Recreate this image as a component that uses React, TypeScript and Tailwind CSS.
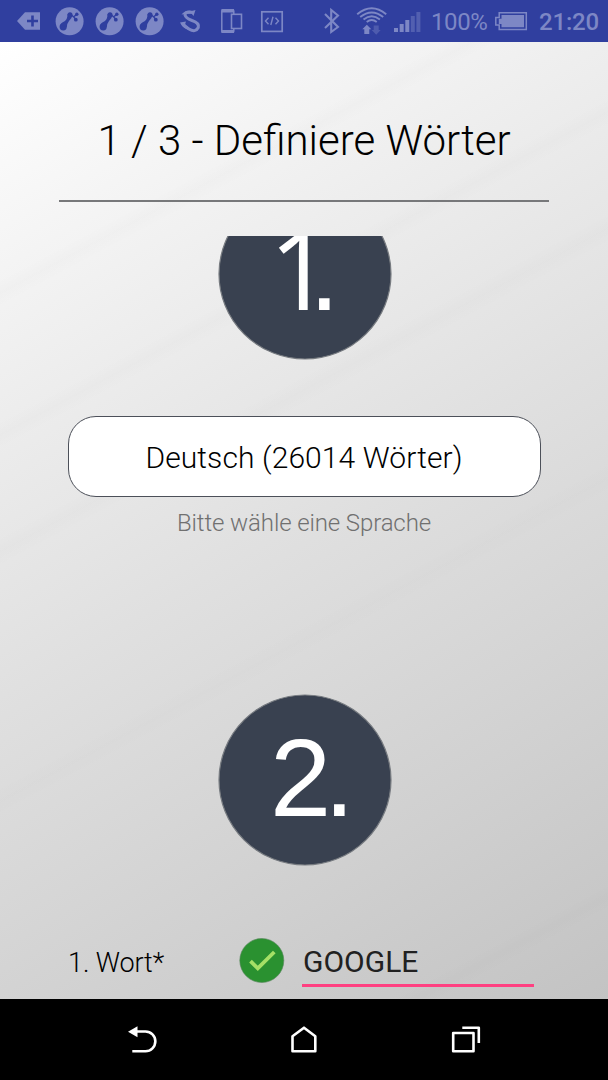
import type { ReactNode } from "react";

function TrayIcon({ children }: { children: ReactNode }) {
  return (
    <svg viewBox="0 0 40 42" className="h-[42px] w-10 shrink-0" fill="none">
      {children}
    </svg>
  );
}

function BrushIcon() {
  return (
    <TrayIcon>
      <circle cx="19.6" cy="21.3" r="14" fill="currentColor" />
      <g fill="#303f9f">
        <circle cx="13.2" cy="26.8" r="3.6" />
        <path d="M10.2 24.6 Q12 22.3 15 21 Q17.5 19 17.6 14 L22.4 15 Q22 18.5 19 21 Q17 23.5 16.8 27 Z" />
        <circle cx="20" cy="14.7" r="2.5" />
        <circle cx="26.8" cy="14.2" r="1.7" />
        <circle cx="25.8" cy="19.7" r="1.9" />
      </g>
      <path d="M20.5 14.3 L24 17.2 L25.8 19.7 M23.5 17 L26.8 14.2" stroke="#303f9f" strokeWidth="1.3" />
    </TrayIcon>
  );
}

function StatusBar() {
  return (
    <div className="flex h-[42px] items-center bg-[#303f9f] text-[#7d87c5]">
      <svg viewBox="0 0 50 42" className="h-[42px] w-[50px] shrink-0">
        <path d="M17 21 L25 12.3 H40 V29.8 H25 Z" fill="currentColor" />
        <path d="M32.5 15.5 V26.5 M27 21 H38" stroke="#303f9f" strokeWidth="2.6" />
      </svg>
      <BrushIcon />
      <BrushIcon />
      <BrushIcon />
      <TrayIcon>
        <path
          d="M23.5 12.5 Q15.5 10.5 15 15 Q15.5 18 22 20.5 Q29.5 23 28.3 27.5 Q25.5 33 19 29 Q15 26.5 12.5 23.5"
          stroke="currentColor"
          strokeWidth="3"
        />
        <path d="M11.5 14.5 Q15 9.5 22 11 L25.5 10 L23.5 16 L21.5 13.5 Z M10 22.5 L16 21.5 L15 24.5 L23 31 Q13 30 10 22.5 Z" fill="currentColor" />
      </TrayIcon>
      <TrayIcon>
        <rect x="11.8" y="10" width="12" height="22.3" rx="1" stroke="currentColor" strokeWidth="1.5" />
        <path d="M11.5 9 H24 V12.5 H11.5 Z M11.5 30 H24 V33 H11.5 Z" fill="currentColor" />
        <rect x="21.5" y="14.3" width="10" height="14.2" fill="#303f9f" stroke="currentColor" strokeWidth="1.6" />
      </TrayIcon>
      <TrayIcon>
        <rect x="11.8" y="11.8" width="20.4" height="19.6" stroke="currentColor" strokeWidth="1.7" />
        <path
          d="M18.5 17.8 L15.5 21 L18.5 24.2 M25.5 17.8 L28.5 21 L25.5 24.2 M23 16.8 L20.8 25"
          stroke="currentColor"
          strokeWidth="1.4"
        />
      </TrayIcon>

      <svg viewBox="0 0 40 42" className="ml-5 h-[42px] w-10 shrink-0" fill="none">
        <path d="M15 14 L28 27 L21.2 32 V10 L28 15.5 L15 28" stroke="currentColor" strokeWidth="2.1" />
      </svg>
      <TrayIcon>
        <path
          d="M7.5 14 Q22 2 36.5 14 M10.5 16.8 Q22 7.5 33.5 16.8 M13.8 19.3 Q22 12.7 30.2 19.3 M17 21.8 Q22 17.8 27 21.8"
          transform="translate(-.3 .3)"
          stroke="currentColor"
          strokeWidth="1.9"
        />
        <path d="M16.8 24.8 L21.3 29.3 H19.3 V34 H14.3 V29.3 H12.3 Z" fill="currentColor" />
        <path d="M23.7 25.5 H28.7 V30 H30.7 L26.2 34.8 L21.7 30 H23.7 Z" fill="currentColor" opacity=".4" />
      </TrayIcon>
      <svg viewBox="0 0 41 42" className="h-[42px] w-[41px] shrink-0" fill="currentColor">
        <path d="M4 28 H8 V32 H4 Z M9.7 24 H13.7 V32 H9.7 Z M15.3 20 H19.3 V32 H15.3 Z" />
        <path d="M20.8 16 H24.8 V32 H20.8 Z M26.4 12 H30.4 V32 H26.4 Z" opacity=".45" />
      </svg>
      <span className="w-[61px] pt-[2px] text-[24px] leading-[40px] tracking-[-0.4px]">100%</span>
      <svg viewBox="0 0 46 42" className="h-[42px] w-[46px] shrink-0" fill="none">
        <path d="M7.2 12.8 H34.3 V29.5 H7.2 V25 H3.8 V17.5 H7.2 Z" stroke="currentColor" strokeWidth="1.5" />
        <path d="M9.5 15 H32 V27.3 H9.5 V24 H6.8 V18.8 H9.5 Z" fill="currentColor" />
      </svg>
      <span className="ml-px pt-[2px] text-[24px] font-medium leading-[40px] tracking-[-0.2px]">21:20</span>
    </div>
  );
}

function Step({ children }: { children: ReactNode }) {
  return (
    <svg viewBox="0 0 174 172" className="h-[172px] w-[174px] shrink-0" fill="#fff">
      <ellipse cx="87" cy="86" rx="86" ry="85" fill="#394150" stroke="#777b80" strokeWidth="1.2" />
      {children}
    </svg>
  );
}

function NavBar() {
  return (
    <nav className="flex h-[81px] items-center justify-center gap-[120px] bg-black text-white">
      <svg viewBox="0 0 42 42" className="size-[42px]" fill="none">
        <path d="M12 12.5 H24.5 A9.7 9.7 0 0 1 24.5 32.2 H11.3" stroke="currentColor" strokeWidth="2.6" />
        <path d="M7 12.7 L16.5 7.2 V18.2 Z" fill="currentColor" />
      </svg>
      <svg viewBox="0 0 42 42" className="size-[42px]" fill="none">
        <path
          d="M9.5 32.2 V17.2 L21 8.7 L32.3 17.2 V32.2 Z"
          stroke="currentColor"
          strokeWidth="2.6"
          strokeLinejoin="round"
        />
      </svg>
      <svg viewBox="0 0 42 42" className="size-[42px]" fill="none">
        <path
          d="M8.2 14 H28.5 V32.2 H8.2 Z M17.3 8.7 H33.8 V24"
          stroke="currentColor"
          strokeWidth="2.6"
          strokeLinejoin="round"
        />
      </svg>
    </nav>
  );
}

export default function App() {
  return (
    <div className="flex h-[1080px] w-[608px] flex-col overflow-hidden font-['Roboto',sans-serif]">
      <StatusBar />
      <main className="flex h-[957px] flex-col bg-[linear-gradient(152deg,transparent_18.5%,#00000003_19.6%,transparent_20.7%,transparent_29.6%,#00000003_30.7%,transparent_31.8%,transparent_38.6%,#00000003_39.8%,transparent_41%,transparent_58%,#00000002_59.3%,transparent_60.5%,transparent_91%,#00000003_92%,transparent_93%),linear-gradient(150deg,#ffffff_0%,#f1f1f1_22%,#e0e0e0_50%,#d0d0d0_78%,#c3c3c3_100%)] text-black">
        <header className="mx-[59px] flex h-[160px] flex-col border-b-2 border-[#77787a] pt-[69px]">
          <h1 className="whitespace-nowrap text-center text-[42px] font-light leading-[60px]">
            1 / 3 - Definiere Wörter
          </h1>
        </header>

        {/* scrolled list, the first step runs under the header */}
        <section className="mt-[34px] flex h-[763px] flex-col items-center overflow-hidden">
          <div className="-mt-[48px] ml-[2px] flex">
            <Step>
              <text y="122" fontSize="110">
                <tspan x="51" fontFamily="Open Sans, sans-serif">1</tspan>
                <tspan x="91" fontFamily="Liberation Sans, sans-serif">.</tspan>
              </text>
            </Step>
          </div>
          <button className="mt-[56px] h-[81px] w-[473px] shrink-0 rounded-[28px] border border-[#4c5059] bg-white pt-[2px] text-[30px] font-light tracking-[0.1px]">
            Deutsch (26014 Wörter)
          </button>
          <p className="mt-[10px] text-[24px] font-light leading-8 tracking-[-0.12px] text-[#707070]">
            Bitte wähle eine Sprache
          </p>
          <div className="ml-[2px] mt-[155px] flex">
            <Step>
              <text x="52 106" y="122" fontSize="110" fontFamily="Liberation Sans, sans-serif">
                2.
              </text>
            </Step>
          </div>
          <div className="mt-[71px] flex w-[472px] items-start">
            <label className="mt-[10px] w-[171px] text-[27px] font-light leading-8 tracking-[-0.1px]">1. Wort*</label>
            <svg viewBox="0 0 46 46" className="mt-px size-[46px]" fill="none">
              <circle cx="22.8" cy="22.5" r="22" fill="#2a9130" stroke="#55855a" strokeWidth=".6" />
              <path d="M11.5 23.2 L18.8 30.4 L35.3 14" stroke="#a5e066" strokeWidth="3.8" />
            </svg>
            <div className="ml-[17px] h-[50px] w-[232px] border-b-[3px] border-[#ff4081] pl-px pt-[5px] text-[30px] leading-[40px] text-[#212121]">
              GOOGLE
            </div>
          </div>
        </section>
      </main>
      <NavBar />
    </div>
  );
}
